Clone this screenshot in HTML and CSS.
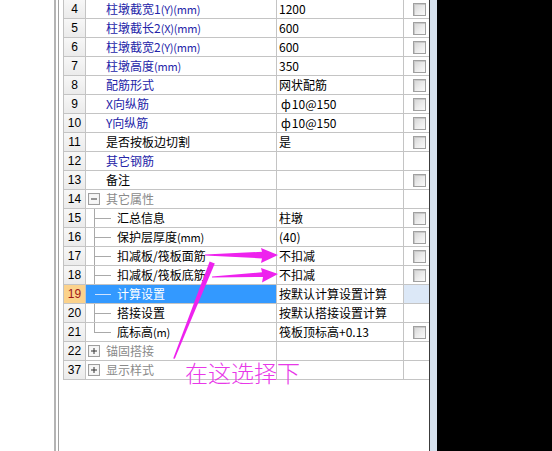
FILE: index.html
```html
<!DOCTYPE html>
<html lang="zh">
<head>
<meta charset="utf-8">
<title>属性编辑</title>
<link rel="stylesheet" href="styles.css">
</head>
<body>
<div class="app">
  <div class="gutter"></div>
  <div class="frame">
    <div class="frame-inner">
      <div class="grid">
        <div class="row"><div class="num">4</div><div class="name blue">柱墩截宽1<span class="lat">(Y)(mm)</span></div><div class="val">1200</div><div class="chk"><span class="cb"></span></div></div>
        <div class="row"><div class="num">5</div><div class="name blue">柱墩截长2<span class="lat">(X)(mm)</span></div><div class="val">600</div><div class="chk"><span class="cb"></span></div></div>
        <div class="row"><div class="num">6</div><div class="name blue">柱墩截宽2<span class="lat">(Y)(mm)</span></div><div class="val">600</div><div class="chk"><span class="cb"></span></div></div>
        <div class="row"><div class="num">7</div><div class="name blue">柱墩高度<span class="lat">(mm)</span></div><div class="val">350</div><div class="chk"><span class="cb"></span></div></div>
        <div class="row"><div class="num">8</div><div class="name blue">配筋形式</div><div class="val">网状配筋</div><div class="chk"><span class="cb"></span></div></div>
        <div class="row"><div class="num">9</div><div class="name blue">X向纵筋</div><div class="val rebar"><span class="sym">ф</span>10@150</div><div class="chk"><span class="cb"></span></div></div>
        <div class="row"><div class="num">10</div><div class="name blue">Y向纵筋</div><div class="val rebar"><span class="sym">ф</span>10@150</div><div class="chk"><span class="cb"></span></div></div>
        <div class="row"><div class="num">11</div><div class="name">是否按板边切割</div><div class="val">是</div><div class="chk"><span class="cb"></span></div></div>
        <div class="row"><div class="num">12</div><div class="name blue">其它钢筋</div><div class="val"></div><div class="chk"></div></div>
        <div class="row"><div class="num">13</div><div class="name">备注</div><div class="val"></div><div class="chk"><span class="cb"></span></div></div>
        <div class="row"><div class="num">14</div><div class="name group"><svg class="exp" width="12" height="12" viewBox="0 0 12 12"><rect x="0.5" y="0.5" width="11" height="11" fill="#eeeeee" stroke="#9e9e9e"/><rect x="1.5" y="1.5" width="9" height="9" fill="#f7f7f7"/><line x1="3" y1="6" x2="9" y2="6" stroke="#333" stroke-width="1"/></svg>其它属性</div><div class="val"></div><div class="chk"></div></div>
        <div class="row"><div class="num">15</div><div class="name tree"><span class="stem"></span>汇总信息</div><div class="val">柱墩</div><div class="chk"><span class="cb"></span></div></div>
        <div class="row"><div class="num">16</div><div class="name tree"><span class="stem"></span>保护层厚度<span class="lat">(mm)</span></div><div class="val">(40)</div><div class="chk"><span class="cb"></span></div></div>
        <div class="row"><div class="num">17</div><div class="name tree"><span class="stem"></span>扣减板/筏板面筋</div><div class="val">不扣减</div><div class="chk"><span class="cb"></span></div></div>
        <div class="row"><div class="num">18</div><div class="name tree"><span class="stem"></span>扣减板/筏板底筋</div><div class="val">不扣减</div><div class="chk"><span class="cb"></span></div></div>
        <div class="row selected"><div class="num">19</div><div class="name tree"><span class="stem"></span>计算设置</div><div class="val">按默认计算设置计算</div><div class="chk"></div></div>
        <div class="row"><div class="num">20</div><div class="name tree"><span class="stem"></span>搭接设置</div><div class="val">按默认搭接设置计算</div><div class="chk"></div></div>
        <div class="row"><div class="num">21</div><div class="name tree last"><span class="stem"></span>底标高<span class="lat">(m)</span></div><div class="val">筏板顶标高+0.13</div><div class="chk"><span class="cb"></span></div></div>
        <div class="row"><div class="num">22</div><div class="name group"><svg class="exp" width="12" height="12" viewBox="0 0 12 12"><rect x="0.5" y="0.5" width="11" height="11" fill="#eeeeee" stroke="#9e9e9e"/><rect x="1.5" y="1.5" width="9" height="9" fill="#f7f7f7"/><line x1="3" y1="6" x2="9" y2="6" stroke="#333" stroke-width="1"/><line x1="6" y1="3" x2="6" y2="9" stroke="#333" stroke-width="1"/></svg>锚固搭接</div><div class="val"></div><div class="chk"></div></div>
        <div class="row"><div class="num">37</div><div class="name group"><svg class="exp" width="12" height="12" viewBox="0 0 12 12"><rect x="0.5" y="0.5" width="11" height="11" fill="#eeeeee" stroke="#9e9e9e"/><rect x="1.5" y="1.5" width="9" height="9" fill="#f7f7f7"/><line x1="3" y1="6" x2="9" y2="6" stroke="#333" stroke-width="1"/><line x1="6" y1="3" x2="6" y2="9" stroke="#333" stroke-width="1"/></svg>显示样式</div><div class="val"></div><div class="chk"></div></div>
      </div>
    </div>
  </div>
  <div class="strip"></div>
</div>

<svg class="marks" width="552" height="451" viewBox="0 0 552 451">
  <polygon fill="#ee22ee" points="205,254.4 262,251.8 261,248 278,255 261,263 262,258.4 205,255.6"/>
  <polygon fill="#ee22ee" points="212,276.4 262,272.3 261,268 278,274 262,282.5 263,277 212,277.6"/>
  <polygon fill="#ee22ee" points="173.2,358.5 174.8,358.8 214.8,263.4 209.6,261.6"/>
</svg>
<div class="note">在这选择下</div>
</body>
</html>
```

FILE: styles.css
```css
html, body {
  margin: 0;
  padding: 0;
}

body {
  background: #000;
  width: 552px;
  height: 451px;
  overflow: hidden;
  position: relative;
}

.app {
  display: flex;
  width: 437px;
  height: 451px;
  background: #fff;
}

.gutter {
  width: 54px;
  flex: none;
}

.frame {
  display: flex;
  border-left: 2px solid #b4b4b4;
  padding-left: 2px;
  background: #fff;
}

.frame-inner {
  border-left: 1px solid #a2a2a2;
  padding-left: 4px;
}

.grid {
  border-left: 1px solid #c2c2c2;
  width: 365px;
  font: 12px "Noto Sans CJK SC", sans-serif;
  color: #000;
}

.row {
  display: grid;
  grid-template-columns: 22px 191px 127px 25px;
  height: 19px;
}

.row > div {
  box-sizing: border-box;
  height: 19px;
  border-bottom: 1px solid #c4c4c4;
  border-right: 1px solid #c4c4c4;
  display: flex;
  align-items: center;
  white-space: nowrap;
  overflow: hidden;
  line-height: 18px;
}

.row > .chk {
  border-right: none;
  padding-left: 9px;
}

.num {
  justify-content: center;
  font: 12px "Liberation Sans", sans-serif;
  background: linear-gradient(#f7f7f7, #ebebeb);
  color: #000;
}

.name {
  padding-left: 20px;
}

.name.blue {
  color: #2424a8;
}

.lat {
  font-size: 11px;
  letter-spacing: -0.2px;
}

.name.group {
  padding-left: 2px;
  color: #8a8a8a;
}

.exp {
  flex: none;
  margin-right: 6px;
}

.name.tree {
  padding-left: 8px;
  align-items: stretch;
}

.name.tree {
  line-height: 18px;
}

.stem {
  flex: none;
  width: 17px;
  margin-right: 6px;
  background-image:
    linear-gradient(#a9a9a9, #a9a9a9),
    linear-gradient(#a9a9a9, #a9a9a9);
  background-size: 1px 100%, 17px 1px;
  background-position: 0 0, 0 9px;
  background-repeat: no-repeat;
}

.name.tree.last .stem {
  background-size: 1px 10px, 17px 1px;
}

.val {
  padding-left: 2px;
}

.rebar {
  padding-left: 4px;
}

.sym {
  font-size: 12px;
  margin-right: 1px;
}

.cb {
  width: 13px;
  height: 13px;
  box-sizing: border-box;
  border: 1px solid #a0a0a0;
  background: linear-gradient(135deg, #d4d4d4 0%, #ececec 55%, #fafafa 100%);
  box-shadow: inset 1px 1px 0 #c8c8c8;
}

.row.selected .num {
  background: #fbd28c;
  color: #a01818;
}

.row.selected .name {
  background: #3399ff;
  color: #fff;
}

.row.selected .stem {
  background-image:
    linear-gradient(#3399ff, #3399ff),
    linear-gradient(#cfe3ff, #cfe3ff);
}

.row.selected .chk {
  background: #dce8f7;
}

.strip {
  width: 7px;
  flex: none;
  border-left: 1px solid #3c3c3c;
  background: #d6e1ee;
}

.marks {
  position: absolute;
  left: 0;
  top: 0;
  pointer-events: none;
}

.note {
  position: absolute;
  left: 185px;
  top: 359px;
  font: 300 23px/26px "Noto Sans CJK SC", sans-serif;
  color: #e838e8;
  white-space: nowrap;
}
```
